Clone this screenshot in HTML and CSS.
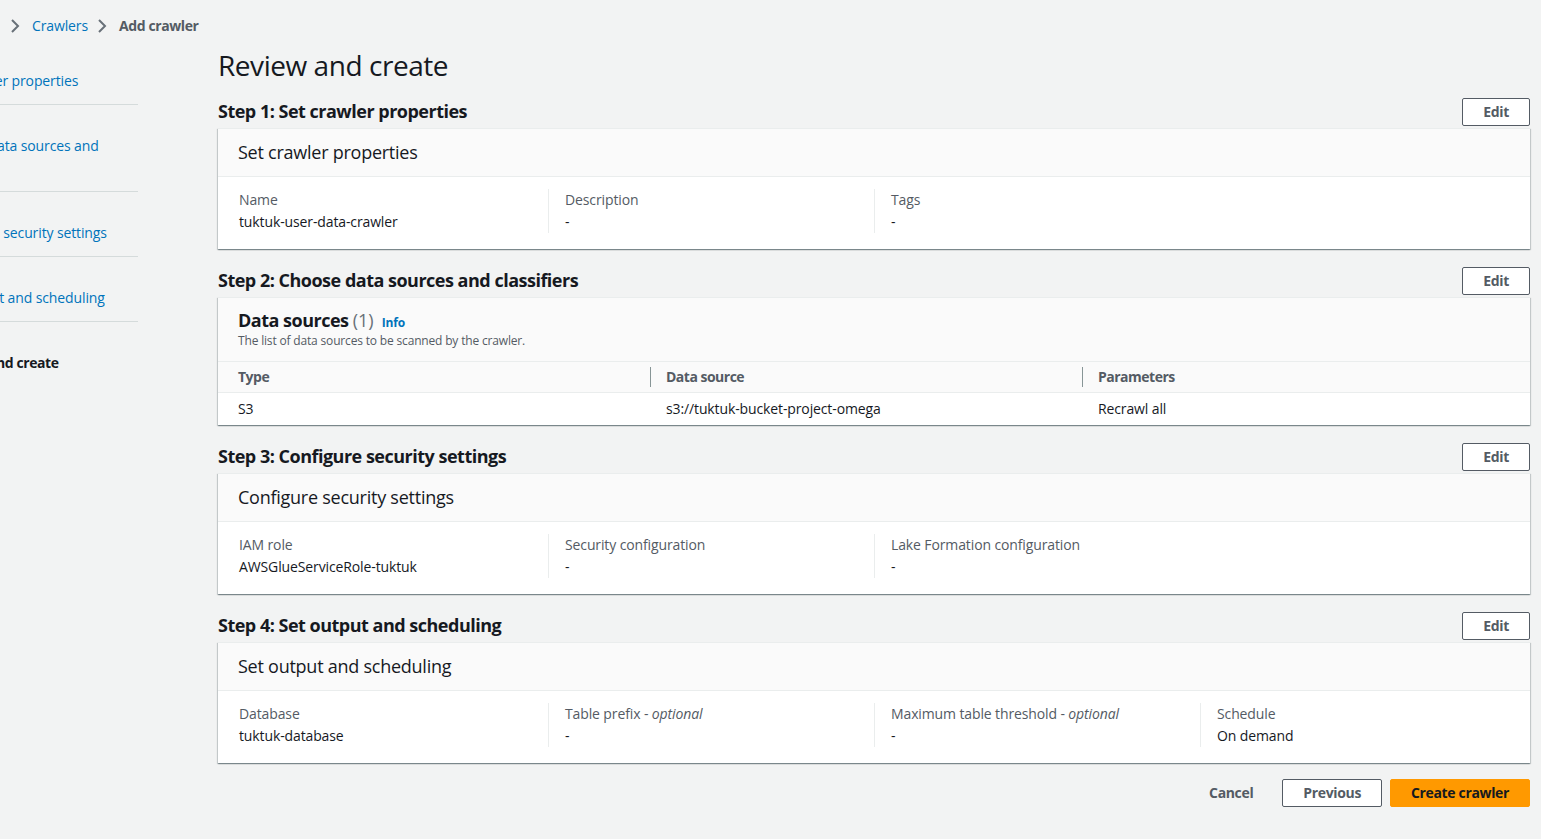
FILE: index.html
```html
<!DOCTYPE html>
<html lang="en">
<head>
<meta charset="utf-8">
<title>Add crawler - Review and create</title>
<link rel="stylesheet" href="styles.css">
</head>
<body>
<nav class="breadcrumbs">
  <svg class="chev" viewBox="0 0 16 16" width="16" height="16"><path d="M5 2l6 6-6 6" fill="none" stroke="#687078" stroke-width="2"/></svg>
  <a class="crumb-link" href="#">Crawlers</a>
  <svg class="chev" viewBox="0 0 16 16" width="16" height="16"><path d="M5 2l6 6-6 6" fill="none" stroke="#687078" stroke-width="2"/></svg>
  <span class="crumb-current">Add crawler</span>
</nav>
<div class="layout">
  <aside class="wizard-nav">
    <ul class="steps">
      <li class="step"><span class="step-num">Step 1</span><a class="step-link" href="#">Set crawler properties</a></li>
      <li class="step"><span class="step-num">Step 2</span><a class="step-link" href="#">Choose data sources and classifiers</a></li>
      <li class="step"><span class="step-num">Step 3</span><a class="step-link" href="#">Configure security settings</a></li>
      <li class="step"><span class="step-num">Step 4</span><a class="step-link" href="#">Set output and scheduling</a></li>
      <li class="step"><span class="step-num">Step 5</span><span class="step-active">Review and create</span></li>
    </ul>
  </aside>
  <main class="main">
    <h1 class="page-title">Review and create</h1>

    <section class="review-step">
      <div class="step-head">
        <h2 class="step-title">Step 1: Set crawler properties</h2>
        <button class="btn">Edit</button>
      </div>
      <div class="container">
        <div class="container-head"><h3 class="container-title">Set crawler properties</h3></div>
        <div class="container-body">
          <div class="columns">
            <div class="col"><div class="label">Name</div><div class="value">tuktuk-user-data-crawler</div></div>
            <div class="col"><div class="label">Description</div><div class="value">-</div></div>
            <div class="col"><div class="label">Tags</div><div class="value">-</div></div>
            <div class="col empty"></div>
          </div>
        </div>
      </div>
    </section>

    <section class="review-step">
      <div class="step-head">
        <h2 class="step-title">Step 2: Choose data sources and classifiers</h2>
        <button class="btn">Edit</button>
      </div>
      <div class="container">
        <div class="container-head table-head">
          <h3 class="table-title">Data sources <span class="count">(1)</span> <a class="info" href="#">Info</a></h3>
          <p class="table-desc">The list of data sources to be scanned by the crawler.</p>
        </div>
        <table class="table">
          <thead>
            <tr><th class="c1">Type</th><th class="c2">Data source</th><th class="c3">Parameters</th></tr>
          </thead>
          <tbody>
            <tr><td class="c1">S3</td><td class="c2">s3://tuktuk-bucket-project-omega</td><td class="c3">Recrawl all</td></tr>
          </tbody>
        </table>
      </div>
    </section>

    <section class="review-step">
      <div class="step-head">
        <h2 class="step-title">Step 3: Configure security settings</h2>
        <button class="btn">Edit</button>
      </div>
      <div class="container">
        <div class="container-head"><h3 class="container-title">Configure security settings</h3></div>
        <div class="container-body">
          <div class="columns">
            <div class="col"><div class="label">IAM role</div><div class="value">AWSGlueServiceRole-tuktuk</div></div>
            <div class="col"><div class="label">Security configuration</div><div class="value">-</div></div>
            <div class="col"><div class="label">Lake Formation configuration</div><div class="value">-</div></div>
            <div class="col empty"></div>
          </div>
        </div>
      </div>
    </section>

    <section class="review-step">
      <div class="step-head">
        <h2 class="step-title">Step 4: Set output and scheduling</h2>
        <button class="btn">Edit</button>
      </div>
      <div class="container">
        <div class="container-head"><h3 class="container-title">Set output and scheduling</h3></div>
        <div class="container-body">
          <div class="columns">
            <div class="col"><div class="label">Database</div><div class="value">tuktuk-database</div></div>
            <div class="col"><div class="label">Table prefix - <i>optional</i></div><div class="value">-</div></div>
            <div class="col"><div class="label">Maximum table threshold - <i>optional</i></div><div class="value">-</div></div>
            <div class="col"><div class="label">Schedule</div><div class="value">On demand</div></div>
          </div>
        </div>
      </div>
    </section>

    <div class="actions">
      <button class="btn btn-link">Cancel</button>
      <button class="btn">Previous</button>
      <button class="btn btn-primary">Create crawler</button>
    </div>
  </main>
</div>
</body>
</html>
```

FILE: styles.css
```css
* { box-sizing: border-box; }

body {
  margin: 0;
  background: #f2f3f3;
  font-family: "Open Sans", "Liberation Sans", sans-serif;
  font-size: 14px;
  line-height: 22px;
  letter-spacing: -0.12px;
  color: #16191f;
  overflow: hidden;
}

a { text-decoration: none; }

.breadcrumbs {
  display: flex;
  align-items: center;
  height: 22px;
  margin-top: 15px;
  padding-left: 7px;
}

.chev { display: block; flex: none; margin-right: 9px; }
.crumb-link + .chev { margin-left: 6px; }

.crumb-link { color: #0073bb; }
.crumb-current { color: #545b64; font-weight: 700; letter-spacing: -0.4px; }

.layout {
  display: flex;
  margin-top: 3px;
}

.wizard-nav {
  width: 138px;
  flex: none;
  margin-right: 80px;
}

.steps {
  list-style: none;
  margin: 0 0 0 -63px;
  padding: 0;
  width: 201px;
}

.step {
  display: flex;
  flex-direction: column;
  padding: 13px 0 12px;
  border-top: 1px solid #d5dbdb;
}

.step:first-child { border-top: 1px solid transparent; padding-top: 12px; }

.step-num {
  font-size: 12px;
  line-height: 16px;
  color: #687078;
  margin-bottom: 1px;
}

.step-link { color: #0073bb; }
.step-active { font-weight: 700; color: #16191f; letter-spacing: -0.4px; }

.main {
  width: 1312px;
  flex: none;
  padding-top: 7px;
}

.page-title {
  margin: 0 0 15px;
  font-size: 28px;
  line-height: 36px;
  font-weight: 400;
  letter-spacing: -0.45px;
  color: #16191f;
}

.review-step { margin-bottom: 18px; }

.step-head {
  display: flex;
  justify-content: space-between;
  align-items: flex-start;
  height: 28px;
  margin-bottom: 2px;
}

.step-title {
  margin: 0;
  font-size: 18px;
  line-height: 26px;
  font-weight: 700;
  letter-spacing: -0.5px;
}

.btn {
  font-family: inherit;
  font-size: 14px;
  line-height: 18px;
  font-weight: 700;
  color: #545b64;
  background: #fff;
  border: 1px solid #545b64;
  border-radius: 2px;
  padding: 4px 20px;
  height: 28px;
  letter-spacing: -0.35px;
}

.container {
  background: #fff;
  border-top: 1px solid #eaeded;
  box-shadow: 0 1px 1px 0 rgba(0, 28, 36, 0.3), 1px 1px 1px 0 rgba(0, 28, 36, 0.15), -1px 1px 1px 0 rgba(0, 28, 36, 0.15);
}

.container-head {
  background: #fafafa;
  border-bottom: 1px solid #eaeded;
  padding: 12px 20px 13px;
}

.container-title {
  margin: 0;
  font-size: 18px;
  line-height: 22px;
  font-weight: 400;
  letter-spacing: -0.25px;
}

.container-body {
  padding: 12px 4px 16px 20px;
}

.columns {
  display: grid;
  grid-template-columns: repeat(4, 1fr);
  margin-left: -16px;
}

.col {
  padding-left: 16px;
  border-left: 1px solid #eaeded;
}

.col:first-child { border-left-color: transparent; }
.col.empty { border-left-color: transparent; }

.label { color: #545b64; }
.value { color: #16191f; }

.table-head { padding: 11px 20px 12px; }

.table-title {
  margin: 0;
  font-size: 18px;
  line-height: 22px;
  font-weight: 700;
  letter-spacing: -0.5px;
}

.count { font-weight: 400; color: #687078; letter-spacing: 0; }

.info {
  font-size: 12px;
  line-height: 1;
  font-weight: 700;
  color: #0073bb;
  margin-left: 4px;
  letter-spacing: -0.2px;
}

.table-desc {
  margin: 2px 0 0;
  font-size: 12px;
  line-height: 16px;
  letter-spacing: -0.17px;
  color: #545b64;
}

.table {
  width: 100%;
  border-collapse: collapse;
  table-layout: fixed;
}

.table th {
  background: #fafafa;
  color: #545b64;
  font-weight: 700;
  letter-spacing: -0.5px;
  text-align: left;
  padding: 4px 16px;
  position: relative;
}

.table td {
  border-top: 1px solid #eaeded;
  padding: 5px 16px;
  text-align: left;
}

.table .c1 { width: 432px; padding-left: 20px; }
.table .c2 { width: 432px; }

.table th.c2::before,
.table th.c3::before {
  content: "";
  position: absolute;
  left: 0;
  top: 5px;
  bottom: 5px;
  border-left: 1px solid #879596;
}

.actions {
  display: flex;
  justify-content: flex-end;
  gap: 8px;
  margin-top: -2px;
}

.btn-link { border-color: transparent; background: transparent; }

.btn-primary {
  background: #ff9900;
  border-color: #ff9900;
  color: #16191f;
}
```
